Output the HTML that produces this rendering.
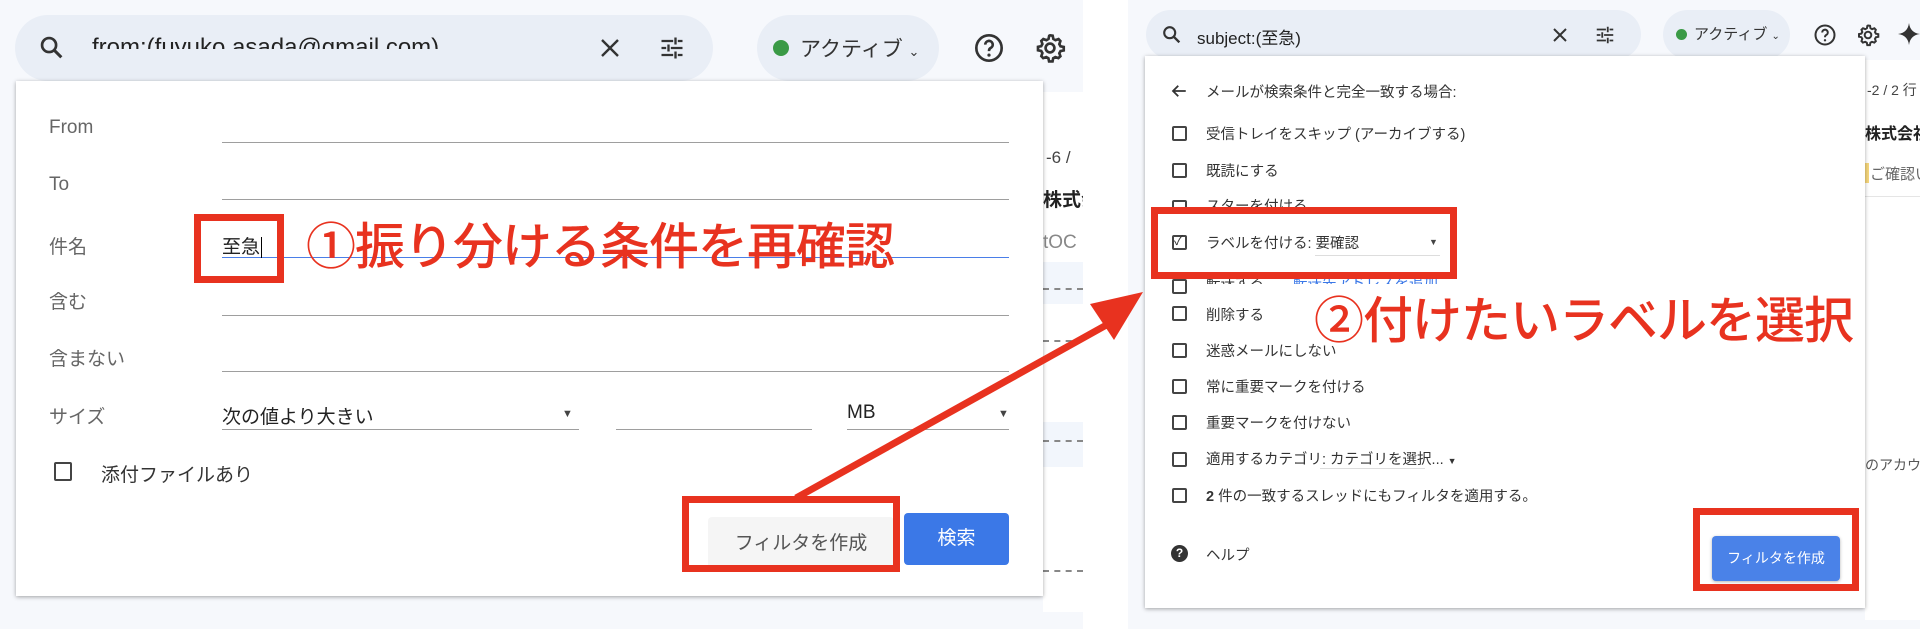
<!DOCTYPE html>
<html><head><meta charset="utf-8"><style>
*{margin:0;padding:0;box-sizing:border-box}
body{width:1920px;height:629px;background:#fff;position:relative;overflow:hidden;font-family:"Liberation Sans","Noto Sans CJK JP",sans-serif;color:#333}
.a{position:absolute}
.lbl{position:absolute;left:49px;font-size:19px;color:#666}
.ul{position:absolute;height:1px;background:#9e9e9e}
.cb{position:absolute;width:15px;height:15px;border:2px solid #444;border-radius:2px}
.rt{position:absolute;left:1206px;font-size:14.5px;color:#333}
.red{position:absolute;border:7px solid #e8321f}
.ann{position:absolute;color:#e8321f;font-family:"Noto Sans CJK JP",sans-serif;font-weight:500;white-space:nowrap;letter-spacing:-1px}
.nw{white-space:nowrap;overflow:hidden}
</style></head><body>
<div class="a" style="left:0;top:0;width:1083px;height:629px;background:#f6f8fc"></div>
<div class="a" style="left:1043px;top:92px;width:40px;height:520px;background:#fff"></div>
<div class="a nw" style="left:1046px;top:148px;width:37px;font-size:17px;color:#444">-6 /</div>
<div class="a nw" style="left:1043px;top:185px;width:40px;font-size:19px;font-weight:bold;color:#222">株式会</div>
<div class="a nw" style="left:1043px;top:232px;width:40px;font-size:19px;color:#888">tOC</div>
<div class="a" style="left:1043px;top:262px;width:40px;height:42px;background:#f2f6fc"></div>
<div class="a" style="left:1043px;top:288px;width:40px;border-top:2px dashed #888"></div>
<div class="a" style="left:1043px;top:340px;width:40px;border-top:2px dashed #888"></div>
<div class="a" style="left:1043px;top:422px;width:40px;height:45px;background:#f2f6fc"></div>
<div class="a" style="left:1043px;top:440px;width:40px;border-top:2px dashed #888"></div>
<div class="a" style="left:1043px;top:570px;width:40px;border-top:2px dashed #888"></div>
<div class="a" style="left:15px;top:15px;width:698px;height:66px;border-radius:33px;background:#e9eef6"></div>
<svg class="a" style="left:38px;top:34px" width="28" height="28" viewBox="0 0 24 24"><circle cx="9.5" cy="9.5" r="6" fill="none" stroke="#333" stroke-width="2.3"/><path d="M14 14l6 6" stroke="#333" stroke-width="2.6"/></svg>
<div class="a" style="left:92px;top:34px;font-size:24px;color:#222;height:15px;overflow:hidden;line-height:28px">from:(fuyuko.asada@gmail.com)</div>
<svg class="a" style="left:598px;top:36px" width="24" height="24" viewBox="0 0 24 24"><path d="M4 4l16 16M20 4L4 20" stroke="#333" stroke-width="2.4"/></svg>
<svg class="a" style="left:658px;top:34px" width="28" height="28" viewBox="0 0 24 24"><path d="M3 6h10M17 6h4M15 3v6M3 12h4M11 12h10M9 9v6M3 18h10M17 18h4M15 15v6" stroke="#333" stroke-width="2"/></svg>
<div class="a" style="left:757px;top:15px;width:182px;height:66px;border-radius:33px;background:#e9eef6"></div>
<div class="a" style="left:773px;top:40px;width:16px;height:16px;border-radius:50%;background:#3a9a46"></div>
<div class="a" style="left:800px;top:33px;font-size:21px;color:#333">アクティブ <span style="font-size:13px">⌄</span></div>
<svg class="a" style="left:973px;top:32px" width="32" height="32" viewBox="0 0 24 24"><circle cx="12" cy="12" r="9.5" fill="none" stroke="#333" stroke-width="2"/><path d="M9.2 9.5a2.8 2.8 0 1 1 4 2.5c-1 .5-1.2 1.2-1.2 2.3" fill="none" stroke="#333" stroke-width="2"/><circle cx="12" cy="17.3" r="1.2" fill="#333"/></svg>
<svg class="a" style="left:1034px;top:32px" width="32" height="32" viewBox="0 0 24 24"><path d="M12 2.5l2 .3.5 2.4 1.6.9 2.3-.8 1.4 1.5-.8 2.3.9 1.6 2.4.5v2.6l-2.4.5-.9 1.6.8 2.3-1.5 1.4-2.3-.8-1.6.9-.5 2.4h-2.6l-.5-2.4-1.6-.9-2.3.8-1.4-1.5.8-2.3-.9-1.6-2.4-.5v-2.6l2.4-.5.9-1.6-.8-2.3 1.5-1.4 2.3.8 1.6-.9.5-2.4z" fill="none" stroke="#333" stroke-width="2"/><circle cx="12" cy="12" r="3.3" fill="none" stroke="#333" stroke-width="2"/></svg>
<div class="a" style="left:16px;top:81px;width:1027px;height:515px;background:#fff;box-shadow:0 1px 4px rgba(0,0,0,.35)"></div>
<div class="lbl" style="top:117px">From</div>
<div class="lbl" style="top:174px">To</div>
<div class="lbl" style="top:232px">件名</div>
<div class="lbl" style="top:287px">含む</div>
<div class="lbl" style="top:344px">含まない</div>
<div class="lbl" style="top:402px">サイズ</div>
<div class="ul" style="left:222px;width:787px;top:142px"></div>
<div class="ul" style="left:222px;width:787px;top:199px"></div>
<div class="ul" style="left:222px;width:787px;top:257px;background:#4a7ee8"></div>
<div class="ul" style="left:222px;width:787px;top:315px"></div>
<div class="ul" style="left:222px;width:787px;top:371px"></div>
<div class="a" style="left:222px;top:232px;font-size:19px;color:#222">至急<span style="border-left:1px solid #000;margin-left:1px"></span></div>
<div class="a" style="left:222px;top:402px;font-size:19px;color:#222">次の値より大きい</div>
<div class="a" style="left:562px;top:408px;font-size:11px;color:#444">▼</div>
<div class="ul" style="left:222px;width:357px;top:429px"></div>
<div class="ul" style="left:616px;width:196px;top:429px"></div>
<div class="a" style="left:847px;top:402px;font-size:19px;color:#222">MB</div>
<div class="a" style="left:998px;top:408px;font-size:11px;color:#444">▼</div>
<div class="ul" style="left:847px;width:162px;top:429px"></div>
<div class="cb" style="left:54px;top:462px;width:18px;height:19px"></div>
<div class="a" style="left:101px;top:460px;font-size:19px;color:#333">添付ファイルあり</div>
<div class="a" style="left:708px;top:517px;width:186px;height:52px;background:#f5f5f5;border-radius:4px"></div>
<div class="a" style="left:708px;top:528px;width:186px;text-align:center;font-size:19px;color:#555">フィルタを作成</div>
<div class="a" style="left:904px;top:513px;width:105px;height:52px;background:#3b78e7;border-radius:4px;color:#fff;font-size:19px;text-align:center;line-height:52px">検索</div>
<div class="red" style="left:682px;top:496px;width:218px;height:76px"></div>
<div class="red" style="left:194px;top:214px;width:90px;height:69px"></div>
<div class="ann" style="left:306px;top:212px;font-size:50px;line-height:62px">①振り分ける条件を再確認</div>
<div class="a" style="left:1128px;top:0;width:792px;height:629px;background:#f6f8fc"></div>
<div class="a" style="left:1865px;top:60px;width:55px;height:560px;background:#fff"></div>
<div class="a nw" style="left:1867px;top:80px;width:53px;font-size:14px;color:#444">-2 / 2 行</div>
<div class="a nw" style="left:1865px;top:120px;width:55px;font-size:16px;font-weight:bold;color:#222">株式会社)</div>
<div class="a" style="left:1865px;top:163px;width:4px;height:20px;background:#f6d77c"></div>
<div class="a nw" style="left:1870px;top:163px;width:50px;font-size:15px;color:#666">ご確認い</div>
<div class="a" style="left:1865px;top:196px;width:55px;height:1px;background:#e5e5e5"></div>
<div class="a nw" style="left:1865px;top:455px;width:55px;font-size:14px;color:#555">のアカウン</div>
<div class="a" style="left:1146px;top:10px;width:495px;height:49px;border-radius:25px;background:#e9eef6"></div>
<svg class="a" style="left:1161px;top:24px" width="22" height="22" viewBox="0 0 24 24"><circle cx="9.5" cy="9.5" r="6" fill="none" stroke="#333" stroke-width="2.3"/><path d="M14 14l6 6" stroke="#333" stroke-width="2.6"/></svg>
<div class="a" style="left:1197px;top:24px;font-size:17px;color:#222">subject:(至急)</div>
<svg class="a" style="left:1551px;top:26px" width="18" height="18" viewBox="0 0 24 24"><path d="M4 4l16 16M20 4L4 20" stroke="#333" stroke-width="2.6"/></svg>
<svg class="a" style="left:1594px;top:24px" width="22" height="22" viewBox="0 0 24 24"><path d="M3 6h10M17 6h4M15 3v6M3 12h4M11 12h10M9 9v6M3 18h10M17 18h4M15 15v6" stroke="#333" stroke-width="2"/></svg>
<div class="a" style="left:1663px;top:10px;width:127px;height:49px;border-radius:25px;background:#e9eef6"></div>
<div class="a" style="left:1676px;top:29px;width:11px;height:11px;border-radius:50%;background:#3a9a46"></div>
<div class="a" style="left:1694px;top:23px;font-size:15px;color:#333">アクティブ <span style="font-size:10px">⌄</span></div>
<svg class="a" style="left:1813px;top:23px" width="24" height="24" viewBox="0 0 24 24"><circle cx="12" cy="12" r="9.5" fill="none" stroke="#333" stroke-width="2"/><path d="M9.2 9.5a2.8 2.8 0 1 1 4 2.5c-1 .5-1.2 1.2-1.2 2.3" fill="none" stroke="#333" stroke-width="2"/><circle cx="12" cy="17.3" r="1.2" fill="#333"/></svg>
<svg class="a" style="left:1856px;top:23px" width="24" height="24" viewBox="0 0 24 24"><path d="M12 2.5l2 .3.5 2.4 1.6.9 2.3-.8 1.4 1.5-.8 2.3.9 1.6 2.4.5v2.6l-2.4.5-.9 1.6.8 2.3-1.5 1.4-2.3-.8-1.6.9-.5 2.4h-2.6l-.5-2.4-1.6-.9-2.3.8-1.4-1.5.8-2.3-.9-1.6-2.4-.5v-2.6l2.4-.5.9-1.6-.8-2.3 1.5-1.4 2.3.8 1.6-.9.5-2.4z" fill="none" stroke="#333" stroke-width="2"/><circle cx="12" cy="12" r="3.3" fill="none" stroke="#333" stroke-width="2"/></svg>
<svg class="a" style="left:1897px;top:22px" width="24" height="24" viewBox="0 0 24 24"><path d="M12 1C12.8 7.5 16.5 11.2 23 12 16.5 12.8 12.8 16.5 12 23 11.2 16.5 7.5 12.8 1 12 7.5 11.2 11.2 7.5 12 1z" fill="#333"/></svg>
<div class="a" style="left:1145px;top:56px;width:720px;height:552px;background:#fff;box-shadow:0 1px 4px rgba(0,0,0,.35)"></div>
<svg class="a" style="left:1170px;top:82px" width="18" height="18" viewBox="0 0 24 24"><path d="M21 12H4M11 5l-7 7 7 7" fill="none" stroke="#333" stroke-width="2.4"/></svg>
<div class="rt" style="top:81px">メールが検索条件と完全一致する場合:</div>
<div class="cb" style="left:1172px;top:126px"></div><div class="rt" style="top:123px">受信トレイをスキップ (アーカイブする)</div>
<div class="cb" style="left:1172px;top:163px"></div><div class="rt" style="top:160px">既読にする</div>
<div class="cb" style="left:1172px;top:200px"></div><div class="rt" style="top:195px">スターを付ける</div>
<div class="a" style="left:1151px;top:207px;width:306px;height:72px;background:#fff"></div>
<div class="cb" style="left:1172px;top:235px"></div><div class="a" style="left:1174px;top:230px;font-size:13px;color:#333">✓</div>
<div class="rt" style="top:232px">ラベルを付ける: 要確認</div>
<div class="a" style="left:1315px;top:255px;width:125px;height:1px;background:#ddd"></div>
<div class="a" style="left:1429px;top:237px;font-size:9px;color:#444">▼</div>
<div class="cb" style="left:1172px;top:279px"></div><div class="rt" style="top:272px;height:12px;overflow:hidden">転送する　　<span style="color:#3b78e7">転送先アドレスを追加</span></div>
<div class="cb" style="left:1172px;top:306px"></div><div class="rt" style="top:304px">削除する</div>
<div class="cb" style="left:1172px;top:343px"></div><div class="rt" style="top:340px">迷惑メールにしない</div>
<div class="cb" style="left:1172px;top:379px"></div><div class="rt" style="top:376px">常に重要マークを付ける</div>
<div class="cb" style="left:1172px;top:415px"></div><div class="rt" style="top:412px">重要マークを付けない</div>
<div class="cb" style="left:1172px;top:452px"></div><div class="rt" style="top:448px">適用するカテゴリ: カテゴリを選択... <span style="font-size:9px">▼</span></div>
<div class="a" style="left:1320px;top:468px;width:105px;height:1px;background:#ddd"></div>
<div class="cb" style="left:1172px;top:488px"></div><div class="rt" style="top:485px"><b>2</b> 件の一致するスレッドにもフィルタを適用する。</div>
<div class="a" style="left:1171px;top:545px;width:17px;height:17px;border-radius:50%;background:#333;color:#fff;font-size:12px;font-weight:bold;text-align:center;line-height:17px">?</div>
<div class="rt" style="top:544px">ヘルプ</div>
<div class="a" style="left:1712px;top:536px;width:128px;height:45px;background:#4a82e8;border-radius:4px;color:#fff;font-size:14px;text-align:center;line-height:45px;box-shadow:0 1px 3px rgba(0,0,0,.3)">フィルタを作成</div>
<div class="red" style="left:1693px;top:508px;width:166px;height:83px"></div>
<div class="red" style="left:1151px;top:207px;width:306px;height:72px"></div>
<div class="ann" style="left:1314px;top:285px;font-size:50px;line-height:64px">②付けたいラベルを選択</div>
<svg class="a" style="left:0;top:0" width="1920" height="629"><path d="M796 498L1110 323" stroke="#e8321f" stroke-width="7"/><path d="M1143 292L1090 304 1114 340z" fill="#e8321f"/></svg>
</body></html>
